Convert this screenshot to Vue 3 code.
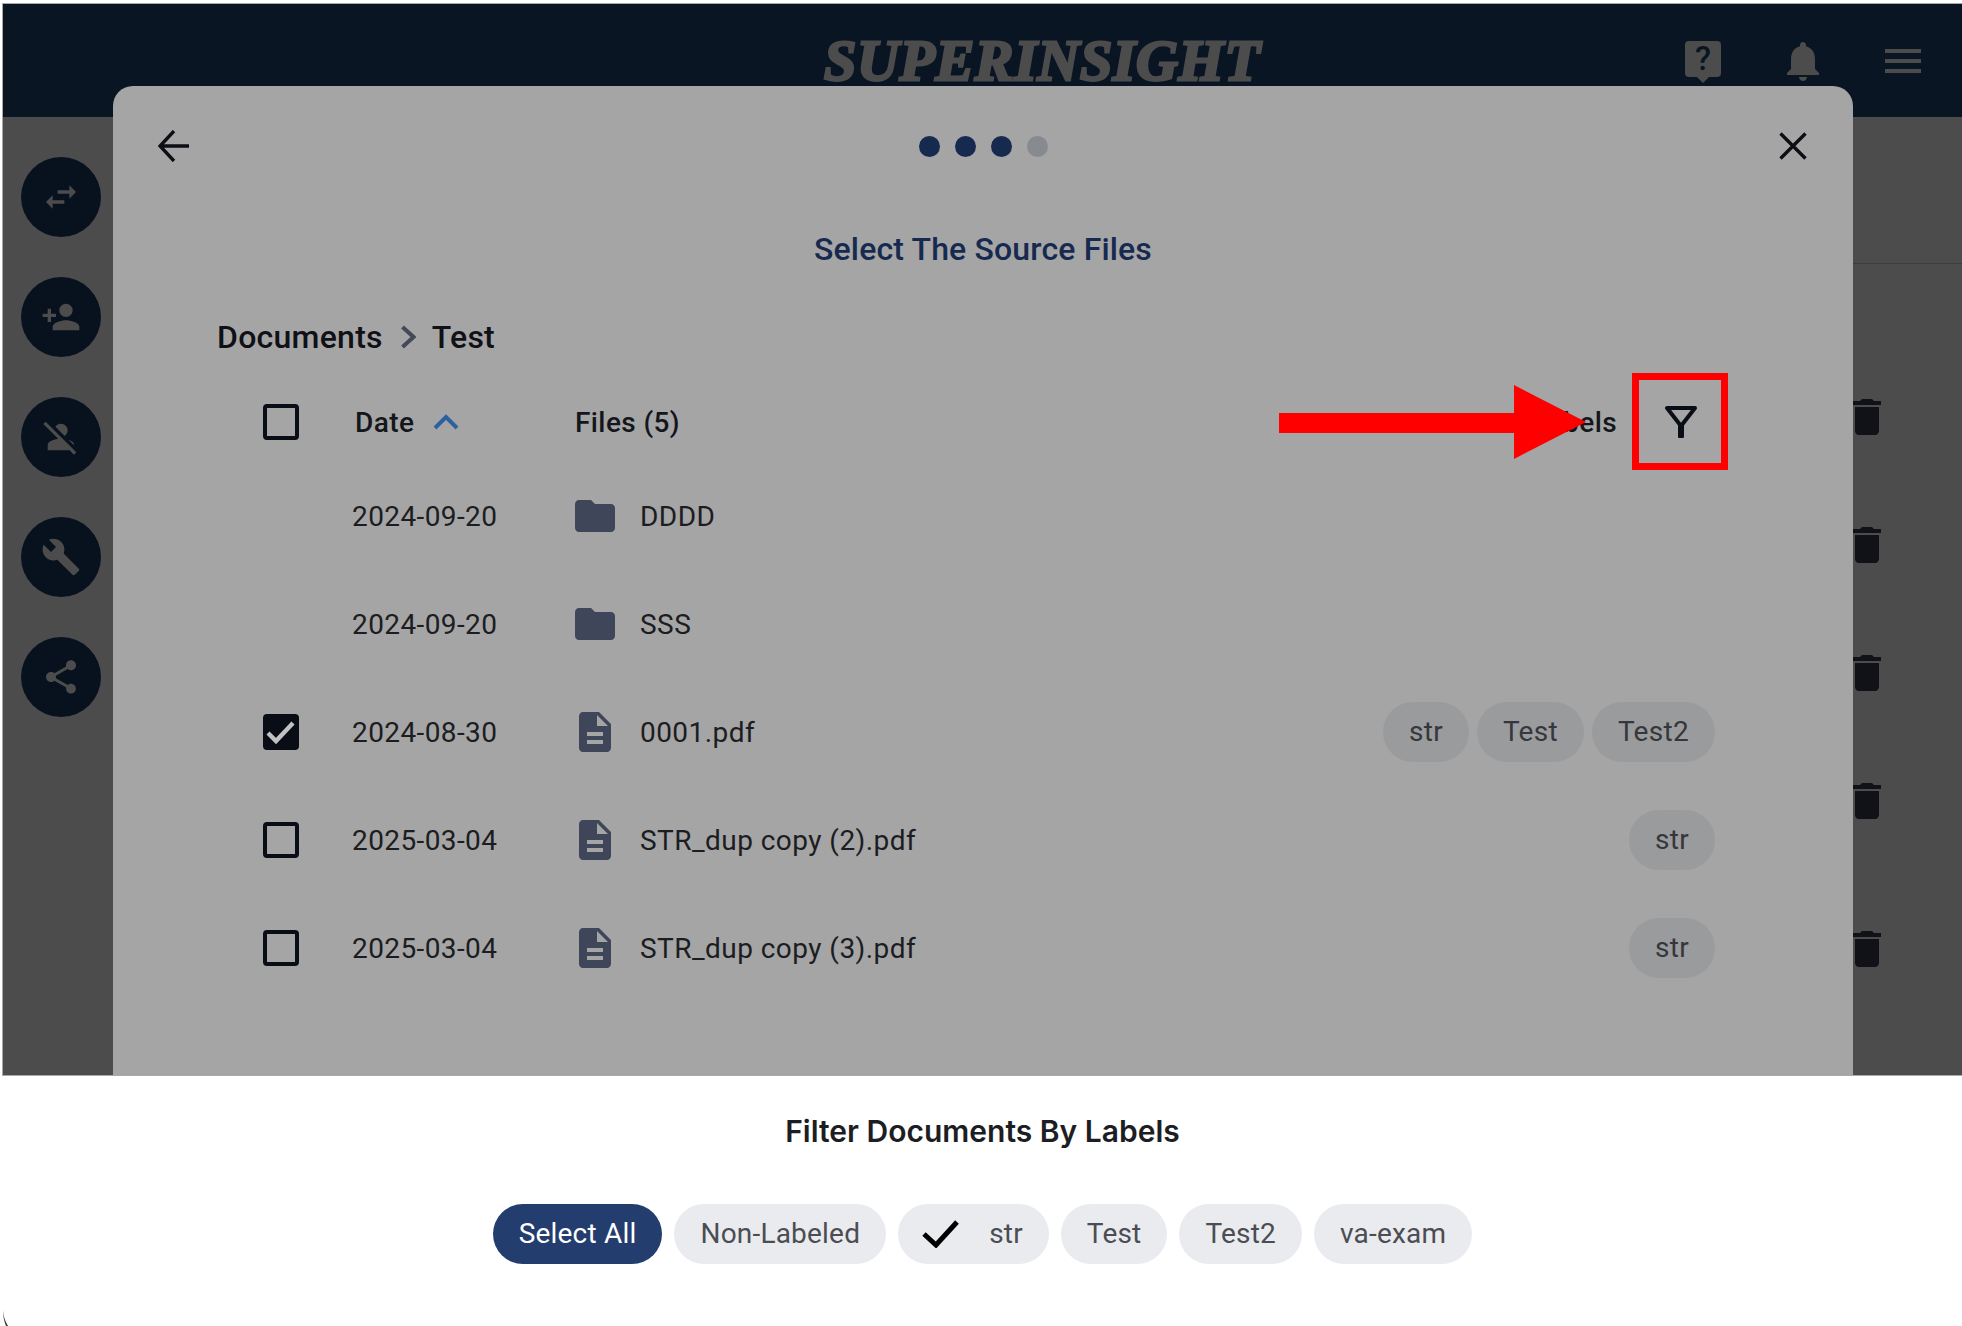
<script setup>
const navIcons = [
  'M6.99 11L3 15l3.99 4v-3H14v-2H6.99v-3zM21 9l-3.99-4v3H10v2h7.01v3L21 9z',
  'M15 12c2.21 0 4-1.79 4-4s-1.79-4-4-4-4 1.79-4 4 1.79 4 4 4zm-9-2V7H4v3H1v2h3v3h2v-3h3v-2H6zm9 4c-2.67 0-8 1.34-8 4v2h16v-2c0-2.66-5.33-4-8-4z',
  'M8.65 5.82C9.36 4.72 10.6 4 12 4c2.21 0 4 1.79 4 4 0 1.4-.72 2.64-1.82 3.35L8.65 5.82zM20 17.17c-.02-1.1-.63-2.11-1.61-2.62-.54-.28-1.13-.54-1.77-.76L20 17.17zM21.19 21.19L2.81 2.81 1.39 4.22l8.89 8.89c-1.81.23-3.39.79-4.67 1.45C4.61 15.07 4 16.1 4 17.22V20h13.17l2.61 2.61 1.41-1.42z',
  'M22.7 19l-9.1-9.1c.9-2.3.4-5-1.5-6.9-2-2-5-2.4-7.4-1.3L9 6 6 9 1.6 4.7C.4 7.1.9 10.1 2.9 12.1c1.9 1.9 4.6 2.4 6.9 1.5l9.1 9.1c.4.4 1 .4 1.4 0l2.3-2.3c.5-.4.5-1.1.1-1.4z',
  'M18 16.08c-.76 0-1.44.3-1.96.77L8.91 12.7c.05-.23.09-.46.09-.7s-.04-.47-.09-.7l7.05-4.11c.54.5 1.25.81 2.04.81 1.66 0 3-1.34 3-3s-1.34-3-3-3-3 1.34-3 3c0 .24.04.47.09.7L8.04 9.81C7.5 9.31 6.79 9 6 9c-1.66 0-3 1.34-3 3s1.34 3 3 3c.79 0 1.5-.31 2.04-.81l7.12 4.16c-.05.21-.08.43-.08.65 0 1.61 1.31 2.92 2.92 2.92 1.61 0 2.92-1.31 2.92-2.92s-1.31-2.92-2.92-2.92z'
]
const trashPath = 'M6 19c0 1.1.9 2 2 2h8c1.1 0 2-.9 2-2V7H6v12zM19 4h-3.5l-1-1h-5l-1 1H5v2h14V4z'
const folderPath = 'M10 4H4c-1.1 0-1.99.9-1.99 2L2 18c0 1.1.9 2 2 2h16c1.1 0 2-.9 2-2V8c0-1.1-.9-2-2-2h-8l-2-2z'
const filePath = 'M14 2H6c-1.1 0-1.99.9-1.99 2L4 20c0 1.1.89 2 1.99 2H18c1.1 0 2-.9 2-2V8l-6-6zm2 16H8v-2h8v2zm0-4H8v-2h8v2zm-3-5V3.5L18.5 9H13z'
const rows = [
  { date: '2024-09-20', name: 'DDDD', folder: true, labels: [] },
  { date: '2024-09-20', name: 'SSS', folder: true, labels: [] },
  { date: '2024-08-30', name: '0001.pdf', checked: true, labels: ['str', 'Test', 'Test2'] },
  { date: '2025-03-04', name: 'STR_dup copy (2).pdf', labels: ['str'] },
  { date: '2025-03-04', name: 'STR_dup copy (3).pdf', labels: ['str'] }
]
const chips = [
  { text: 'Select All', active: true },
  { text: 'Non-Labeled' },
  { text: 'str', check: true },
  { text: 'Test' },
  { text: 'Test2' },
  { text: 'va-exam' }
]
</script>

<template>
  <div class="page">
    <div class="screen">
      <header class="topbar">
        <span class="logo">SUPERINSIGHT</span>
        <div class="help">
          <span class="help-mark">?</span>
        </div>
        <svg class="bell" viewBox="0 0 24 24"><path d="M12 22c1.1 0 2-.9 2-2h-4c0 1.1.89 2 2 2zm6-6v-5c0-3.07-1.64-5.64-4.5-6.32V4c0-.83-.67-1.5-1.5-1.5s-1.5.67-1.5 1.5v.68C7.63 5.36 6 7.92 6 11v5l-2 2v1h16v-1l-2-2z" /></svg>
        <div class="burger"><i></i><i></i><i></i></div>
      </header>

      <div class="behind">
        <nav class="rail">
          <div v-for="(d, i) in navIcons" :key="i" class="rail-btn">
            <svg viewBox="0 0 24 24"><path :d="d" /></svg>
          </div>
        </nav>
        <div class="behind-main">
          <div class="behind-head"></div>
          <div class="trash-list">
            <svg v-for="n in 5" :key="n" class="trash" viewBox="5 3 14 18"><path :d="trashPath" /></svg>
          </div>
        </div>
      </div>

      <section class="modal">
        <div class="modal-top">
          <svg class="back" viewBox="0 0 32 32"><path d="M31 16H3M16 1 2 16l14 15" /></svg>
          <div class="dots"><i class="on"></i><i class="on"></i><i class="on"></i><i></i></div>
          <svg class="close" viewBox="0 0 28 28"><path d="M1.500 1.500l25 25M26.500 1.500l-25 25" /></svg>
        </div>
        <h2 class="title">Select The Source Files</h2>
        <div class="crumbs">
          <span>Documents</span>
          <svg viewBox="0 0 16 24"><path d="M2.500 2 13.500 12 2.500 22" /></svg>
          <span>Test</span>
        </div>

        <div class="grid-row head-row">
          <span class="box"></span>
          <span class="head-date">Date
            <svg class="sort" viewBox="0 0 26 16"><path d="M2 14 13 3l11 11" /></svg>
          </span>
          <span class="head-files">Files (5)</span>
          <span class="head-labels">
            <span>Labels</span>
            <svg class="filter" viewBox="0 0 32 32"><path class="cone" d="M2 2h28L16 20z" /><path class="stem" d="M16 20v10" /></svg>
          </span>
        </div>

        <div v-for="(r, i) in rows" :key="i" class="grid-row file-row">
          <span v-if="r.folder" class="no-box"></span>
          <span v-else class="box" :class="{ checked: r.checked }">
            <svg v-if="r.checked" viewBox="0 0 28 28"><path d="M1 15l8 8L26 5" /></svg>
          </span>
          <span class="date">{{ r.date }}</span>
          <svg class="file-icon" viewBox="0 0 24 24"><path :d="r.folder ? folderPath : filePath" /></svg>
          <span class="name">{{ r.name }}</span>
          <span class="pills">
            <span v-for="l in r.labels" :key="l" class="pill">{{ l }}</span>
          </span>
        </div>
      </section>
    </div>

    <section class="sheet">
      <h3 class="sheet-title">Filter Documents By Labels</h3>
      <div class="chips">
        <span v-for="c in chips" :key="c.text" class="chip" :class="{ active: c.active, 'has-check': c.check }">
          <svg v-if="c.check" class="chip-check" viewBox="0 0 38 28"><path d="M2 14l12 11L35 2" /></svg>
          {{ c.text }}
        </span>
      </div>
    </section>

    <div class="annotation-box"></div>
    <svg class="annotation-arrow" viewBox="0 0 307 74"><path d="M0 28h235V0l72 37-72 37V48H0z" /></svg>
    <svg class="corner" viewBox="0 0 6 16"><path d="M0 0c.3 6 2 11 5 16H3C1 11 0 6 0 0z" /></svg>
  </div>
</template>

<style>
html, body { margin: 0; background: #fff; }
</style>

<style scoped>
.page {
  position: relative;
  width: 1962px;
  height: 1326px;
  padding: 4px 0 0 3px;
  box-sizing: border-box;
  overflow: hidden;
  background: #fff;
  font-family: Roboto, "Liberation Sans", sans-serif;
  color: #16181d;
}
.screen {
  position: relative;
  height: 1071px;
  display: flex;
  flex-direction: column;
  background: #4c4c4c;
  box-shadow: 0 0 0 1px #a9a9a9;
}
.topbar {
  height: 113px;
  flex: none;
  background: #0a1524;
  display: flex;
  align-items: flex-start;
  box-sizing: border-box;
  padding-left: 821px;
}
.logo {
  width: 440px;
  margin-top: 27px;
  font: italic 700 58px/60px "Liberation Serif", serif;
  -webkit-text-stroke: 2.8px #4c4c4c;
  color: #4c4c4c;
  letter-spacing: 0.65px;
  white-space: nowrap;
}
.help {
  width: 36px;
  height: 36px;
  margin: 37px 0 0 421px;
  background: #4c4c4c;
  border-radius: 4px;
  position: relative;
  display: flex;
  align-items: center;
  justify-content: center;
}
.help::after {
  content: "";
  position: absolute;
  left: 12px;
  bottom: -6px;
  border: 6px solid transparent;
  border-bottom: 0;
  border-top-color: #4c4c4c;
}
.help-mark {
  font: 500 33px/36px Roboto, sans-serif;
  color: #0a1524;
}
.bell {
  width: 48px;
  height: 48px;
  margin: 33px 0 0 58px;
  fill: #4c4c4c;
}
.burger {
  margin: 45px 0 0 58px;
  width: 36px;
  display: flex;
  flex-direction: column;
  gap: 6px;
}
.burger i { height: 4px; background: #4c4c4c; }

.behind { flex: 1; display: flex; min-height: 0; }
.rail {
  width: 110px;
  flex: none;
  box-sizing: border-box;
  padding: 40px 0 0 18px;
  display: flex;
  flex-direction: column;
  gap: 40px;
}
.rail-btn {
  width: 80px;
  height: 80px;
  border-radius: 50%;
  background: #08121f;
  display: flex;
  align-items: center;
  justify-content: center;
}
.rail-btn svg { width: 40px; height: 40px; fill: #4c4c4c; }
.behind-main { flex: 1; display: flex; flex-direction: column; }
.behind-head { height: 146px; border-bottom: 1px solid #3c3d3f; flex: none; }
.trash-list {
  padding: 135px 81px 0 0;
  display: flex;
  flex-direction: column;
  align-items: flex-end;
  gap: 92px;
}
.trash { width: 28px; height: 36px; fill: #101218; flex: none; }
.trash:last-child { margin-top: 20px; }

.modal {
  position: absolute;
  left: 110px;
  top: 82px;
  width: 1740px;
  height: 989px;
  box-sizing: border-box;
  background: #a5a5a5;
  border-radius: 20px 20px 0 0;
  overflow: hidden;
  padding-top: 30px;
}
.modal-top {
  height: 60px;
  display: flex;
  align-items: center;
  justify-content: space-between;
  padding: 0 46px 0 45px;
}
.back { width: 32px; height: 32px; fill: none; stroke: #0c0e14; stroke-width: 3.4px; }
.close { width: 28px; height: 28px; fill: none; stroke: #0c0e14; stroke-width: 3.4px; }
.dots { display: flex; gap: 15px; margin-left: -3px; }
.dots i { width: 21px; height: 21px; border-radius: 50%; background: #878a8f; }
.dots i.on { background: #162a50; }
.title {
  margin: 53px 0 0;
  font-size: 32px;
  line-height: 40px;
  font-weight: 500;
  letter-spacing: 0.15px;
  color: #162a50;
  text-align: center;
}
.crumbs {
  margin: 48px 0 0 104px;
  height: 40px;
  display: flex;
  align-items: center;
  font-size: 32px;
  font-weight: 500;
  letter-spacing: 0.25px;
  color: #0f1116;
}
.crumbs svg {
  width: 16px;
  height: 24px;
  margin: 0 16px 0 17px;
  fill: none;
  stroke: #44495a;
  stroke-width: 4px;
}
.grid-row {
  display: flex;
  align-items: center;
  padding: 0 138px 0 150px;
}
.head-row {
  height: 60px;
  margin-top: 35px;
  font-size: 28px;
  font-weight: 500;
  letter-spacing: 0.4px;
  color: #14161b;
}
.file-row { height: 108px; font-size: 28px; color: #1b1d22; }
.head-row + .file-row { margin-top: 10px; }
.box {
  width: 36px;
  height: 36px;
  box-sizing: border-box;
  border: 4px solid #090d15;
  border-radius: 4px;
  flex: none;
  margin-right: 53px;
  display: flex;
}
.no-box { width: 36px; flex: none; margin-right: 53px; }
.box.checked { background: #090d15; }
.box svg { width: 100%; height: 100%; fill: none; stroke: #c2c2c2; stroke-width: 4.4px; overflow: visible; }
.head-date {
  width: 220px;
  margin-left: 3px;
  flex: none;
  display: flex;
  align-items: center;
  gap: 19px;
}
.sort { width: 26px; height: 16px; fill: none; stroke: #2c609f; stroke-width: 4px; }
.head-files { flex: 1; }
.head-labels { display: flex; align-items: center; gap: 48px; padding-right: 18px; }
.filter { width: 32px; height: 32px; fill: none; stroke: #090d15; stroke-linejoin: round; stroke-linecap: round; }
.cone { stroke-width: 4px; }
.stem { stroke-width: 6px; }
.date { width: 223px; flex: none; font-size: 28px; letter-spacing: 0.4px; }
.file-icon { width: 48px; height: 48px; margin: 0 21px 0 -4px; fill: #40465a; flex: none; }
.name { flex: 1; letter-spacing: 0.45px; }
.pills { display: flex; gap: 8px; color: #36373c; }
.pill {
  height: 60px;
  line-height: 60px;
  padding: 0 26px;
  border-radius: 30px;
  background: #9a9b9d;
  letter-spacing: 0.3px;
}

.sheet { display: flex; flex-direction: column; align-items: center; }
.sheet-title {
  margin: 36px 0 0;
  font: 600 30px/40px Inter, Roboto, sans-serif;
  color: #1c1e24;
}
.chips { display: flex; gap: 12px; margin-top: 53px; }
.chip {
  height: 60px;
  line-height: 60px;
  padding: 0 26px;
  border-radius: 30px;
  background: #e9ebef;
  color: #4b4d53;
  font-size: 28px;
  letter-spacing: 0.2px;
  display: flex;
  align-items: center;
}
.chip.active { background: #233d6e; color: #fff; }
.chip.has-check { padding-left: 24px; }
.chip-check { width: 38px; height: 28px; margin-right: 29px; fill: none; stroke: #000; stroke-width: 5px; }

.annotation-box {
  position: absolute;
  left: 1632px;
  top: 373px;
  width: 96px;
  height: 97px;
  box-sizing: border-box;
  border: 7px solid #ff0000;
}
.annotation-arrow {
  position: absolute;
  left: 1279px;
  top: 385px;
  width: 307px;
  height: 74px;
  fill: #ff0000;
}
.corner {
  position: absolute;
  left: 3px;
  top: 1310px;
  width: 6px;
  height: 16px;
  fill: #333;
}
</style>
